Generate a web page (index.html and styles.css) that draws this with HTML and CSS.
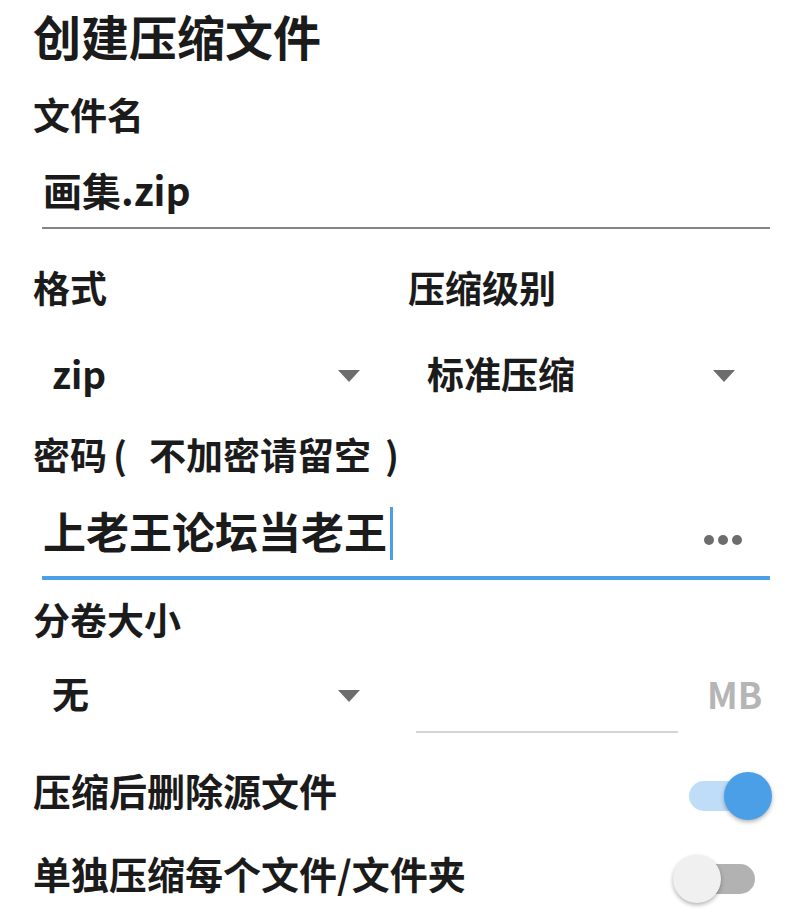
FILE: index.html
```html
<!DOCTYPE html>
<html lang="zh-CN">
<head>
  <meta charset="UTF-8" />
  <meta name="viewport" content="width=device-width, initial-scale=1.0"/>
  <title>创建压缩文件</title>

  <link rel="stylesheet" href="styles.css">
</head>
<body>

  <div class="dialog">
    <h1 class="title">创建压缩文件</h1>

    <div class="label label-name">文件名</div>
    <div class="field field-name"><span class="value">画集.zip</span></div>

    <div class="pair pair-format">
      <div class="col">
        <div class="label">格式</div>
        <div class="spinner"><span>zip</span><i class="arrow"></i></div>
      </div>
      <div class="col">
        <div class="label">压缩级别</div>
        <div class="spinner"><span>标准压缩</span><i class="arrow"></i></div>
      </div>
    </div>

    <div class="label label-pass">密码<span class="paren open">(</span>不加密请留空<span class="paren close">)</span></div>
    <div class="field field-pass">
      <span class="value">上老王论坛当老王</span><span class="caret"></span>
      <span class="dots"><i></i><i></i><i></i></span>
    </div>

    <div class="label label-split">分卷大小</div>
    <div class="pair pair-split">
      <div class="col">
        <div class="spinner"><span>无</span><i class="arrow"></i></div>
      </div>
      <div class="col size">
        <div class="size-input"></div>
        <span class="unit">MB</span>
      </div>
    </div>

    <div class="switch-row first">
      <span>压缩后删除源文件</span>
      <div class="switch on"><i class="track"></i><i class="thumb"></i></div>
    </div>
    <div class="switch-row">
      <span>单独压缩每个文件/文件夹</span>
      <div class="switch"><i class="track"></i><i class="thumb"></i></div>
    </div>
  </div>

</body>
</html>
```

FILE: styles.css
```css
:root {
  --fg: #1b1b1b;
  --accent: #4a9fe6;
  --muted: #6d6d6d;
}

* {
  margin: 0;
  padding: 0;
  box-sizing: border-box;
}

html, body {
  height: 100%;
  overflow: hidden;
  background: #ffffff;
}

body {
  font-family: "Noto Sans CJK SC", "Noto Sans", sans-serif;
  font-weight: 700;
  color: var(--fg);
}

.dialog {
  padding: 0 30px 0 33px;
}

.title {
  font-size: 48px;
  font-weight: 700;
  line-height: 70px;
}

.label {
  font-size: 37px;
  line-height: 44px;
  padding-bottom: 6px;
}

.label-name { margin-top: 22px; }
.label-pass { margin-top: 26px; }
.label-split { margin-top: 17px; }

.paren.open { margin: 0 22px 0 6px; }
.paren.close { margin-left: 14px; }

/* text inputs */
.field {
  margin-left: 9px;
  padding-left: 1px;
  height: 60px;
  display: flex;
  align-items: center;
  box-sizing: content-box;
}

.field .value { margin-bottom: 6px; }

.field-name {
  margin-top: 20px;
  font-size: 39px;
  padding-bottom: 5px;
  border-bottom: 2px solid #858585;
}

.field-pass {
  margin-top: 21px;
  font-size: 43px;
  padding-bottom: 13px;
  border-bottom: 4px solid var(--accent);
}

.caret {
  width: 3px;
  height: 53px;
  margin-left: 3px;
  background: var(--accent);
}

.dots {
  margin-left: auto;
  margin-right: 28px;
  margin-top: 14px;
  display: flex;
  gap: 4px;
}

.dots i {
  width: 10px;
  height: 10px;
  border-radius: 50%;
  background: var(--muted);
}

/* two column rows */
.pair {
  display: grid;
  grid-template-columns: 375px 1fr;
}

.pair-format { margin-top: 36px; }
.pair-format .spinner { margin-top: 31px; }
.pair-split { margin-top: 19px; }

.spinner {
  width: 327px;
  height: 60px;
  padding-left: 19px;
  display: flex;
  align-items: center;
  justify-content: space-between;
  font-size: 37px;
}

.spinner span { margin-bottom: 6px; }

.arrow {
  width: 0;
  height: 0;
  border-left: 11.5px solid transparent;
  border-right: 11.5px solid transparent;
  border-top: 12px solid var(--muted);
}

.size {
  display: flex;
  align-items: flex-start;
}

.size-input {
  width: 262px;
  height: 67px;
  margin-left: 8px;
  border-bottom: 2px solid #d4d4d4;
}

.unit {
  margin-left: 29px;
  line-height: 54px;
  font-size: 36px;
  color: #b5b5b5;
}

/* switches */
.switch-row {
  height: 83px;
  display: flex;
  align-items: center;
  justify-content: space-between;
  font-size: 38px;
}

.switch-row span { margin-bottom: 6px; }

.switch-row.first { margin-top: 18px; }

.switch {
  position: relative;
  width: 99px;
  height: 50px;
  margin-right: -2px;
  margin-top: 6px;
}

.track {
  position: absolute;
  left: 16px;
  top: 10px;
  width: 66px;
  height: 30px;
  border-radius: 15px;
  background: #b2b2b2;
}

.thumb {
  position: absolute;
  left: 0;
  top: 1px;
  width: 48px;
  height: 48px;
  border-radius: 50%;
  background: #f0f0f0;
  box-shadow: 0 2px 4px rgba(0, 0, 0, 0.3);
}

.switch.on .track { background: #bfddf8; }

.switch.on .thumb {
  left: 51px;
  background: var(--accent);
}
```
